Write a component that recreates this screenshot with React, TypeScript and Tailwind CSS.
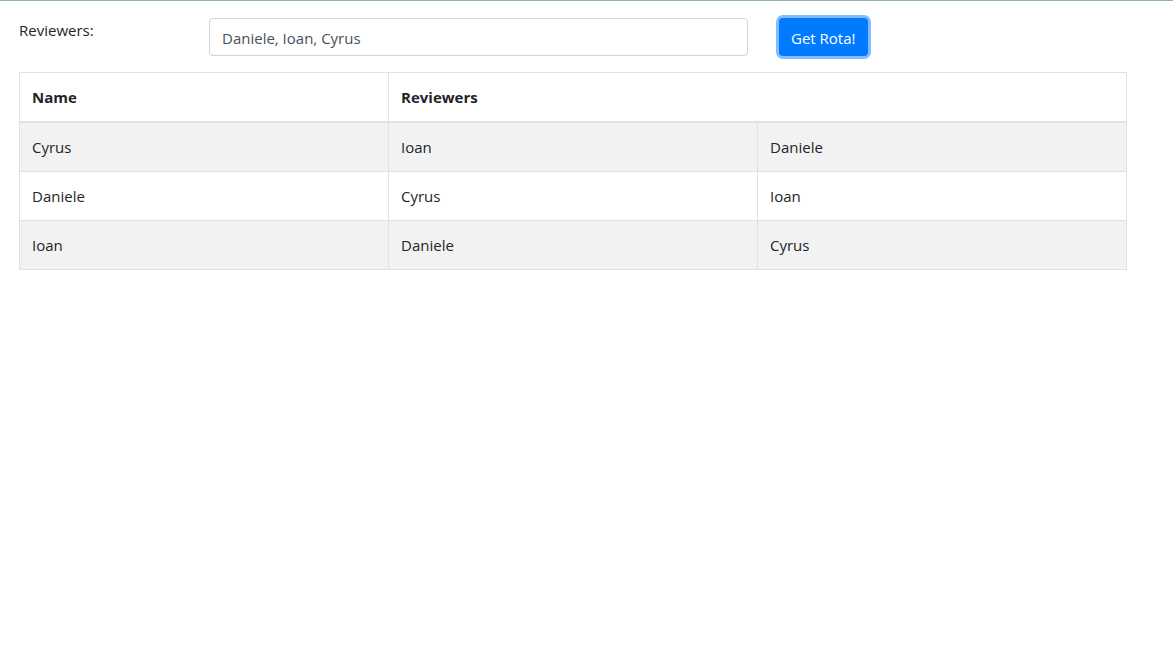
import React from "react";

const rows = [
  ["Cyrus", "Ioan", "Daniele"],
  ["Daniele", "Cyrus", "Ioan"],
  ["Ioan", "Daniele", "Cyrus"],
];

export default function App() {
  return (
    <div
      className="min-h-[660px] bg-white border-t border-[#8fb0b0] text-[#212529] text-[16px] leading-6"
      style={{ fontFamily: '"Open Sans", "Noto Sans", sans-serif' }}
    >
      <div className="px-[19px] pt-[17px]">
        <div className="flex items-start">
          <label className="w-[190px] pt-0 text-[15px]">Reviewers:</label>
          <input
            className="w-[539px] h-[38px] px-[12px] pt-[1px] border border-[#ced4da] rounded-[4px] text-[#495057] text-[15px] outline-none"
            defaultValue="Daniele, Ioan, Cyrus"
          />
          <button className="ml-[31px] h-[38px] px-[12px] pt-[1px] rounded-[4px] bg-[#007bff] text-white text-[15px] ring-[3px] ring-[#80bdff]">
            Get Rota!
          </button>
        </div>
        <table className="mt-[16px] w-[1107px] table-fixed border-collapse text-[15px]">
          <colgroup>
            <col className="w-[369px]" />
            <col className="w-[369px]" />
            <col className="w-[369px]" />
          </colgroup>
          <thead>
            <tr>
              <th className="text-left font-bold px-[12px] py-[12px] border border-[#dee2e6] border-b-2">Name</th>
              <th colSpan={2} className="text-left font-bold px-[12px] py-[12px] border border-[#dee2e6] border-b-2">
                Reviewers
              </th>
            </tr>
          </thead>
          <tbody>
            {rows.map((r, i) => (
              <tr key={i} className={i % 2 === 0 ? "bg-[#f2f2f2]" : "bg-white"}>
                {r.map((c, j) => (
                  <td key={j} className="px-[12px] py-[12px] border border-[#dee2e6]">
                    {c}
                  </td>
                ))}
              </tr>
            ))}
          </tbody>
        </table>
      </div>
    </div>
  );
}
